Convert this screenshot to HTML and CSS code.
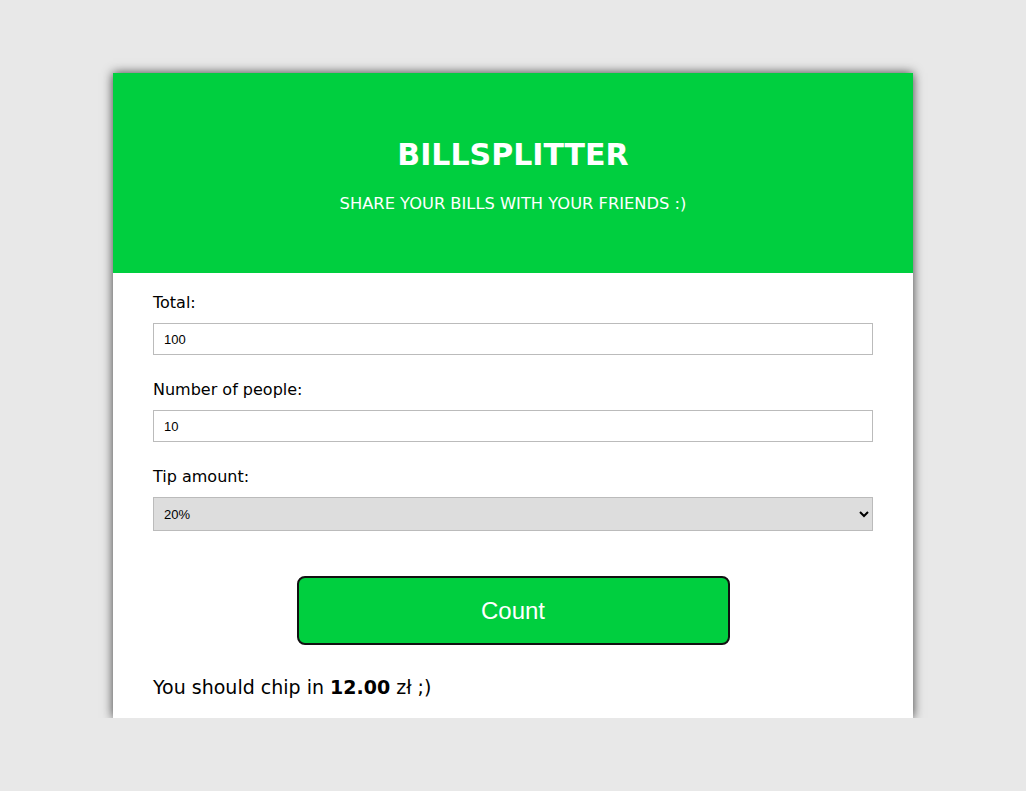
FILE: index.html
```html
<!DOCTYPE html>
<html lang="pl">
<head>
<meta charset="utf-8">
<title>Billsplitter</title>
<link rel="stylesheet" href="styles.css">
</head>
<body>
<main class="card">
  <header class="header">
    <h1 class="title">BILLSPLITTER</h1>
    <p class="subtitle">SHARE YOUR BILLS WITH YOUR FRIENDS :)</p>
  </header>
  <form class="form">
    <label class="label" for="total">Total:</label>
    <input class="field" id="total" type="text" value="100">
    <label class="label" for="people">Number of people:</label>
    <input class="field" id="people" type="text" value="10">
    <label class="label" for="tip">Tip amount:</label>
    <select class="field select" id="tip">
      <option>20%</option>
    </select>
    <button class="btn" type="button">Count</button>
    <p class="result">You should chip in <strong>12.00</strong> zł ;)</p>
  </form>
</main>
</body>
</html>
```
FILE: styles.css
```css
html, body {
  margin: 0;
  padding: 0;
}
body {
  background: #e8e8e8;
  font-family: "DejaVu Sans", sans-serif;
  color: #000;
}
.card {
  width: 800px;
  margin: 73px auto 0;
  background: #fff;
  box-shadow: 0 0 10px rgba(0, 0, 0, 0.75);
}
.header {
  height: 200px;
  background: #00cf3f;
  color: #fff;
  display: flex;
  flex-direction: column;
  align-items: center;
  box-sizing: border-box;
  padding-top: 62px;
}
.title {
  margin: 0;
  font-size: 30px;
  font-weight: 600;
  line-height: 40px;
}
.subtitle {
  margin: 19px 0 0;
  font-size: 16.3px;
  line-height: 20px;
}
.form {
  display: flex;
  flex-direction: column;
  padding: 20px 40px 19px;
}
.label {
  font-size: 16px;
  line-height: 20px;
  margin-bottom: 10px;
}
.field {
  height: 32px;
  box-sizing: border-box;
  border: 1px solid #bbb;
  padding: 0 10px;
  font-family: Arial, "Liberation Sans", sans-serif;
  font-size: 13px;
  margin: 0 0 25px;
  background: #fff;
  color: #000;
}
.select {
  height: 34px;
  background: #ddd;
  padding: 0 6px;
  margin-bottom: 45px;
}
.btn {
  align-self: center;
  width: 433px;
  height: 69px;
  background: #00cf3f;
  border: 2px solid #111;
  border-radius: 8px;
  color: #fff;
  font-family: Arial, "Liberation Sans", sans-serif;
  font-size: 24px;
}
.result {
  margin: 30px 0 0;
  font-size: 19px;
  line-height: 24px;
}
.result strong {
  font-weight: 700;
}
```
